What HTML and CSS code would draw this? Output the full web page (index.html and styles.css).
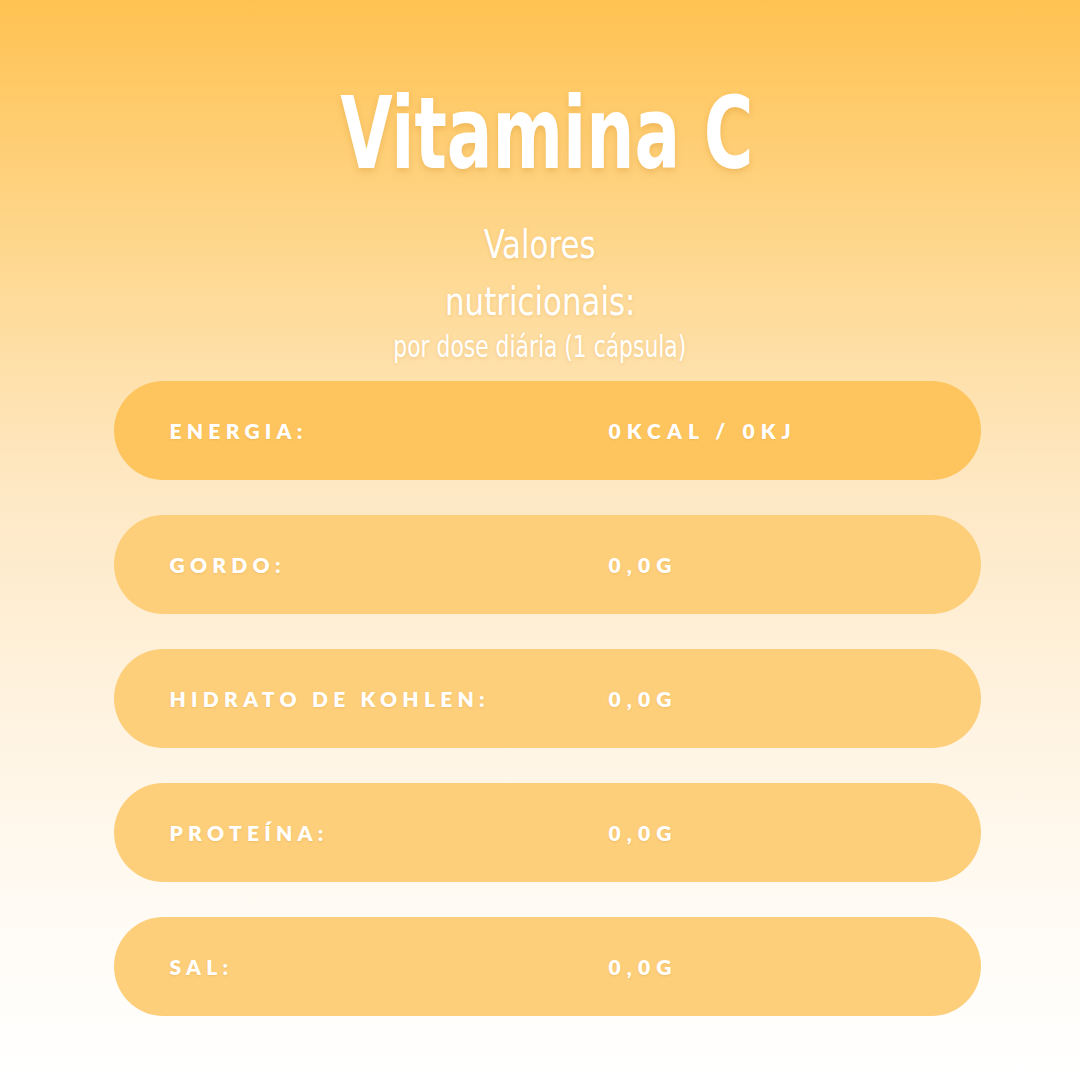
FILE: index.html
```html
<!DOCTYPE html>
<html lang="pt">
<head>
<meta charset="utf-8">
<title>Vitamina C</title>
<link rel="stylesheet" href="styles.css">
</head>
<body>
<main class="page">
  <h1 class="title"><span class="squeeze squeeze-title">Vitamina C</span></h1>
  <div class="subtitle">
    <div class="sub-main"><span class="squeeze squeeze-sub">Valores</span></div>
    <div class="sub-main"><span class="squeeze squeeze-sub">nutricionais:</span></div>
    <div class="sub-small"><span class="squeeze squeeze-small">por dose diária (1 cápsula)</span></div>
  </div>
  <ul class="rows">
    <li class="row row-first"><span class="label">Energia:</span><span class="value">0kcal / 0kJ</span></li>
    <li class="row"><span class="label">Gordo:</span><span class="value">0,0g</span></li>
    <li class="row"><span class="label">Hidrato de kohlen:</span><span class="value">0,0g</span></li>
    <li class="row"><span class="label">Proteína:</span><span class="value">0,0g</span></li>
    <li class="row"><span class="label">Sal:</span><span class="value">0,0g</span></li>
  </ul>
</main>
</body>
</html>
```
FILE: styles.css
```css
html, body {
  margin: 0;
  padding: 0;
}
body {
  width: 1080px;
  height: 1080px;
  overflow: hidden;
  background: linear-gradient(180deg, #ffc252 0%, #fed993 25%, #fee8c4 45%, #fff4e3 68%, #fffcf7 88%, #ffffff 100%);
  color: #ffffff;
}
.page {
  display: flex;
  flex-direction: column;
  align-items: center;
  padding-top: 85px;
}
.squeeze {
  display: inline-block;
  transform-origin: center;
}
.title {
  margin: 0 0 0 14px;
  font-family: "DejaVu Sans Condensed", "DejaVu Sans", sans-serif;
  font-weight: 700;
  font-size: 99px;
  line-height: 98px;
  text-shadow: 0 3px 7px rgba(190, 120, 20, 0.25);
}
.squeeze-title {
  transform: scaleX(0.76);
}
.subtitle {
  margin-top: 33px;
  display: flex;
  flex-direction: column;
  align-items: center;
  font-family: "DejaVu Sans Condensed", "DejaVu Sans", sans-serif;
  text-shadow: 0 1px 4px rgba(190, 120, 20, 0.2);
}
.sub-main {
  font-size: 39px;
  line-height: 57px;
}
.squeeze-sub {
  transform: scaleX(0.88);
}
.sub-small {
  font-size: 30px;
  line-height: 34px;
}
.squeeze-small {
  transform: scaleX(0.81);
}
.rows {
  list-style: none;
  margin: 17px 0 0 14px;
  padding: 0;
  display: flex;
  flex-direction: column;
  gap: 35px;
}
.row {
  width: 867px;
  height: 99px;
  box-sizing: border-box;
  border-radius: 50px;
  background: #fdcf7b;
  display: grid;
  grid-template-columns: 439px 1fr;
  align-items: center;
  padding-left: 56px;
  font-family: "Lato", "DejaVu Sans", sans-serif;
  font-weight: 800;
  font-size: 21px;
  letter-spacing: 0.25em;
  text-transform: uppercase;
  text-shadow: 0 1px 2px rgba(190, 120, 20, 0.2);
}
.value {
  letter-spacing: 0.29em;
}
.row-first {
  background: #fec55e;
}
```
